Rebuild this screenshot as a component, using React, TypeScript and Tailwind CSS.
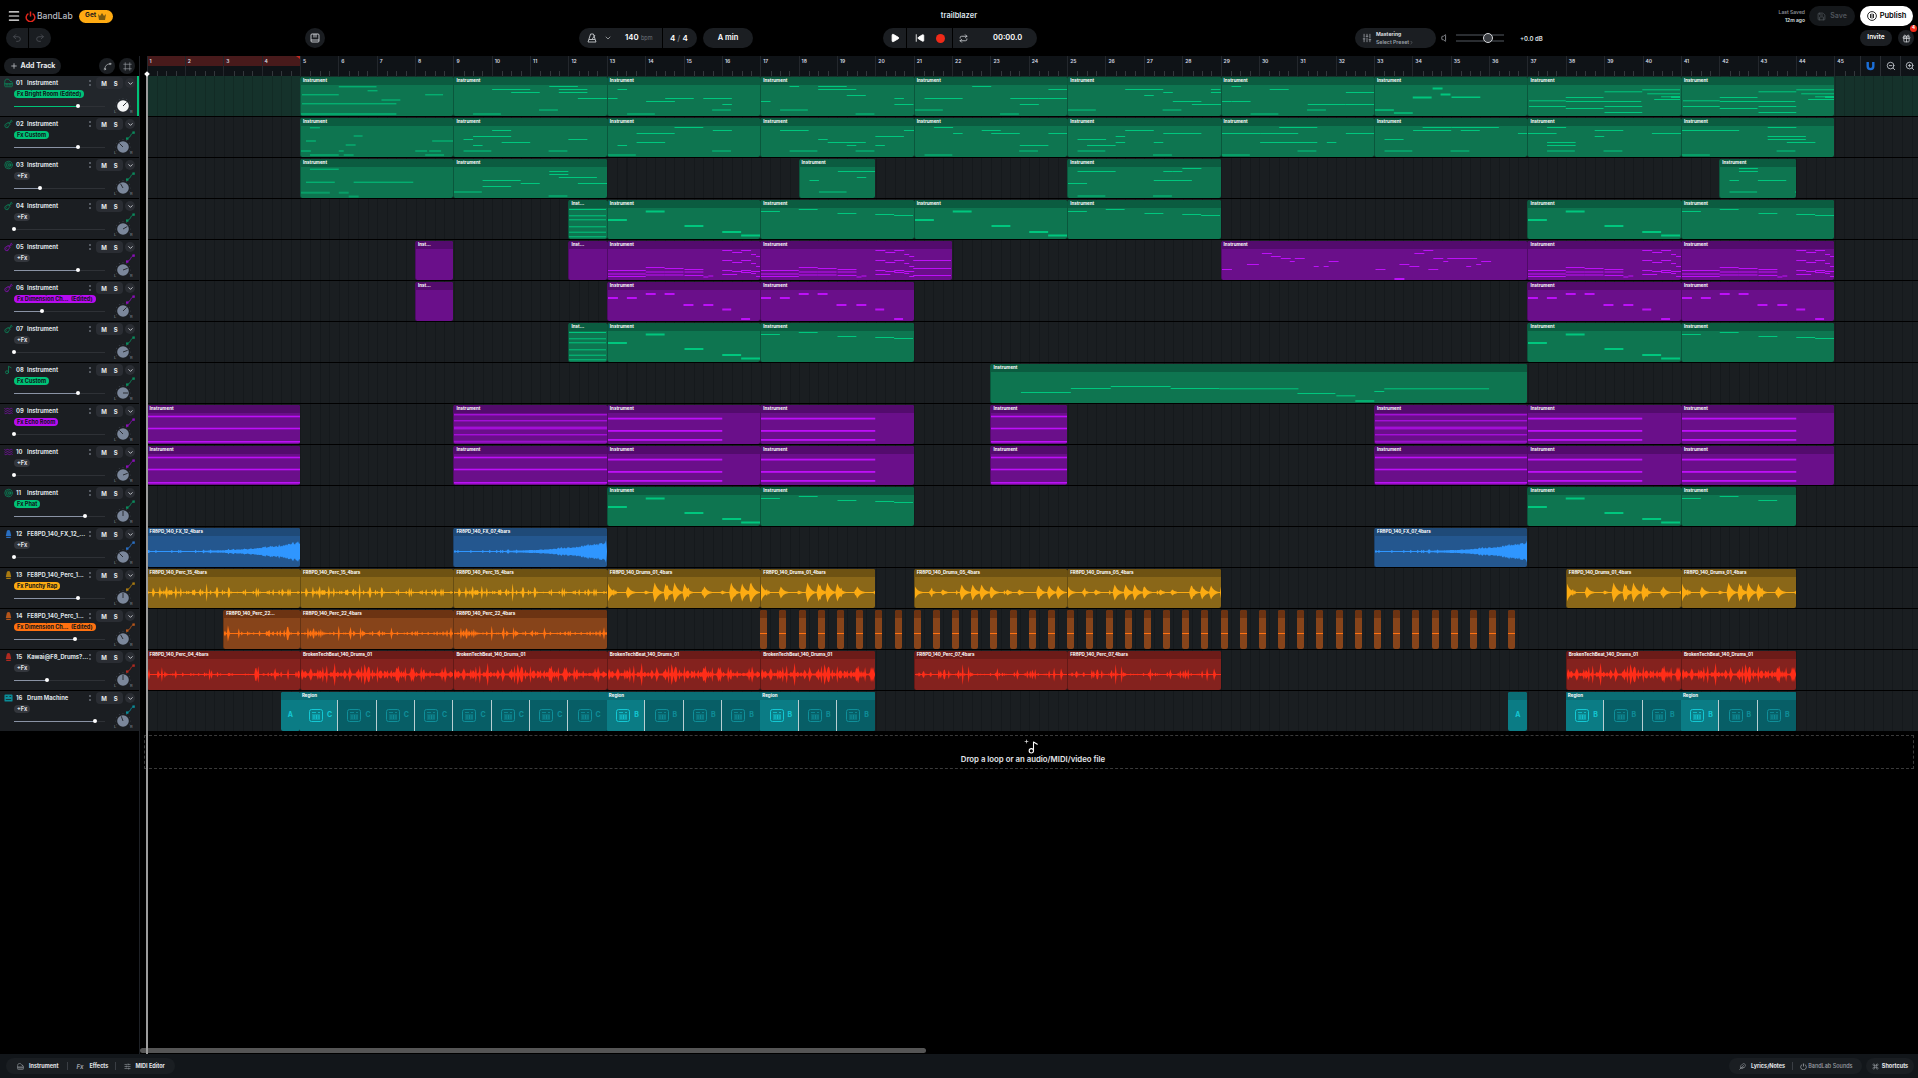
import { ChevronDown, ChevronRight, Command, Feather, Frame, Gift, Guitar, Menu, Music2, Piano, Play, Plus, Redo2, Repeat, Save, SkipBack, SlidersHorizontal, SlidersVertical, Spline, Target, Undo2, Volume, Waves, ZoomIn, ZoomOut } from "lucide-react";

const BAR = 38.36;
const barX = (n: number) => (n - 1) * BAR;

type Tone = "green" | "purple" | "blue" | "yellow" | "orange" | "red" | "teal";

const tones: Record<Tone, { body: string; head: string; mark: string; icon: string; pill: string }> = {
  green: { body: "bg-[#0e7550]", head: "bg-[#0b5c40]", mark: "#00c77e", icon: "text-[#0b8a5c]", pill: "bg-[#00c277]" },
  purple: { body: "bg-[#6a0f8a]", head: "bg-[#530b6d]", mark: "#bd10f8", icon: "text-[#8a10b8]", pill: "bg-[#b70cf0]" },
  blue: { body: "bg-[#24578f]", head: "bg-[#1f4a78]", mark: "#2f96ff", icon: "text-[#2a6fc2]", pill: "bg-[#2f96ff]" },
  yellow: { body: "bg-[#8a6718]", head: "bg-[#6e5212]", mark: "#fcab12", icon: "text-[#a97a10]", pill: "bg-[#fcab12]" },
  orange: { body: "bg-[#87441a]", head: "bg-[#6c3312]", mark: "#ff7110", icon: "text-[#b5551a]", pill: "bg-[#ff7110]" },
  red: { body: "bg-[#84221e]", head: "bg-[#6c1b18]", mark: "#ff2d18", icon: "text-[#b02a20]", pill: "bg-[#ff2d18]" },
  teal: { body: "bg-[#075e66]", head: "bg-[#0a6d75]", mark: "#14c0cc", icon: "text-[#0b8c98]", pill: "bg-[#14c0cc]" },
};

type Wave = "swell" | "perc" | "drums" | "beat";
type ClipDef = { s: number; e: number; label?: string; wave?: Wave };

const ins = (...pairs: [number, number][]): ClipDef[] => pairs.map(([s, e]) => ({ s, e, label: e - s === 1 ? "Inst..." : "Instrument" }));
const EVERY: [number, number][] = [[5, 9], [9, 13], [13, 17], [17, 21], [21, 25], [25, 29], [29, 33], [33, 37], [37, 41], [41, 45]];

const PERC15 = "FR8PD_140_Perc_15_4bars";
const PERC22 = "FR8PD_140_Perc_22_4bars";
const DRUMS1 = "FR8PD_140_Drums_01_4bars";
const DRUMS5 = "FR8PD_140_Drums_05_4bars";
const BROKEN = "BrokenTechBeat_140_Drums_01";
const PERC7 = "FR8PD_140_Perc_07_4bars";

const tracks: {
  name: string; tone: Tone; fx?: string; icon: string; thumb: number; knob: number; clips: ClipDef[];
}[] = [
  { name: "Instrument", tone: "green", fx: "Fx Bright Room (Edited)", icon: "piano", thumb: 78, knob: 45, clips: ins(...EVERY) },
  { name: "Instrument", tone: "green", fx: "Fx Custom", icon: "guitar", thumb: 78, knob: -45, clips: ins(...EVERY) },
  { name: "Instrument", tone: "green", icon: "target", thumb: 40, knob: -30, clips: ins([5, 9], [9, 13], [18, 20], [25, 29], [42, 44]) },
  { name: "Instrument", tone: "green", icon: "guitar", thumb: 14, knob: 60, clips: ins([12, 13], [13, 17], [17, 21], [21, 25], [25, 29], [37, 41], [41, 45]) },
  { name: "Instrument", tone: "purple", icon: "guitar", thumb: 78, knob: 70, clips: ins([8, 9], [12, 13], [13, 17], [17, 22], [29, 37], [37, 41], [41, 45]) },
  { name: "Instrument", tone: "purple", fx: "Fx Dimension Ch...  (Edited)", icon: "guitar", thumb: 42, knob: 45, clips: ins([8, 9], [13, 17], [17, 21], [37, 41], [41, 45]) },
  { name: "Instrument", tone: "green", icon: "guitar", thumb: 14, knob: 70, clips: ins([12, 13], [13, 17], [17, 21], [37, 41], [41, 45]) },
  { name: "Instrument", tone: "green", fx: "Fx Custom", icon: "sax", thumb: 78, knob: 90, clips: ins([23, 37]) },
  { name: "Instrument", tone: "purple", fx: "Fx Echo Room", icon: "waves", thumb: 14, knob: -45, clips: ins([1, 5], [9, 13], [13, 17], [17, 21], [23, 25], [33, 37], [37, 41], [41, 45]) },
  { name: "Instrument", tone: "purple", icon: "waves", thumb: 14, knob: 70, clips: ins([1, 5], [9, 13], [13, 17], [17, 21], [23, 25], [33, 37], [37, 41], [41, 45]) },
  { name: "Instrument", tone: "green", fx: "Fx Phat", icon: "target", thumb: 85, knob: 0, clips: ins([13, 17], [17, 21], [37, 41], [41, 44]) },
  {
    name: "FE8PD_140_FX_12_...", tone: "blue", icon: "bell", thumb: 14, knob: -45,
    clips: [
      { s: 1, e: 5, label: "FR8PD_140_FX_12_4bars", wave: "swell" },
      { s: 9, e: 13, label: "FR8PD_140_FX_07_4bars", wave: "swell" },
      { s: 33, e: 37, label: "FR8PD_140_FX_07_4bars", wave: "swell" },
    ],
  },
  {
    name: "FE8PD_140_Perc_1...", tone: "yellow", fx: "Fx Punchy Rap", icon: "bell", thumb: 78, knob: 0,
    clips: [
      { s: 1, e: 5, label: PERC15, wave: "perc" },
      { s: 5, e: 9, label: PERC15, wave: "perc" },
      { s: 9, e: 13, label: PERC15, wave: "perc" },
      { s: 13, e: 17, label: DRUMS1, wave: "drums" },
      { s: 17, e: 20, label: DRUMS1, wave: "drums" },
      { s: 21, e: 25, label: DRUMS5, wave: "drums" },
      { s: 25, e: 29, label: DRUMS5, wave: "drums" },
      { s: 38, e: 41, label: DRUMS1, wave: "drums" },
      { s: 41, e: 44, label: DRUMS1, wave: "drums" },
    ],
  },
  {
    name: "FE8PD_140_Perc_1...", tone: "orange", fx: "Fx Dimension Ch...  (Edited)", icon: "bell", thumb: 75, knob: -30,
    clips: [
      { s: 3, e: 5, label: "FR8PD_140_Perc_22...", wave: "perc" },
      { s: 5, e: 9, label: PERC22, wave: "perc" },
      { s: 9, e: 13, label: PERC22, wave: "perc" },
    ],
  },
  {
    name: "Kawai@F8_Drums?...", tone: "red", icon: "bell", thumb: 47, knob: 0,
    clips: [
      { s: 1, e: 5, label: "FR8PD_140_Perc_04_4bars", wave: "perc" },
      { s: 5, e: 9, label: BROKEN, wave: "beat" },
      { s: 9, e: 13, label: BROKEN, wave: "beat" },
      { s: 13, e: 17, label: BROKEN, wave: "beat" },
      { s: 17, e: 20, label: BROKEN, wave: "beat" },
      { s: 21, e: 25, label: PERC7, wave: "perc" },
      { s: 25, e: 29, label: PERC7, wave: "perc" },
      { s: 38, e: 41, label: BROKEN, wave: "beat" },
      { s: 41, e: 44, label: BROKEN, wave: "beat" },
    ],
  },
  { name: "Drum Machine", tone: "teal", icon: "machine", thumb: 95, knob: -20, clips: [] },
];

const regions = [
  { s: 5, e: 13, letter: "C" },
  { s: 13, e: 17, letter: "B" },
  { s: 17, e: 20, letter: "B" },
  { s: 38, e: 41, letter: "B" },
  { s: 41, e: 44, letter: "B" },
];

// [x, width, y, height, opacity], in pixels inside the clip body
type N = [number, number, number, number?, number?];

const M1A: N[] = [[38, 38, 1.3], [67, 10, 5.3], [1, 37, 9.3], [81, 19, 14.5], [125, 18, 9.3], [1, 95, 18.3], [0, 96, 28, 2, 0.6]];
const M1B: N[] = [[1, 37, 15.3], [38, 38, 12], [38, 76, 16], [1, 37, 21], [38, 38, 23], [77, 38, 21], [77, 38, 27], [77, 38, 6.3], [115, 38, 4.3], [120, 33, 8.3], [134, 19, 11.3], [144, 9, 11, 2], [127, 26, 14]];
const M1C: N[] = [[0, 19, 24, 2, 0.7], [19, 19, 27, 2, 0.7], [38, 19, 11.5, 2], [58, 10, 2.5, 2], [66, 10, 8.5, 2], [77, 29, 11.5, 1.5]];
const M2A: N[] = [[9, 10, 1.3], [53, 9, 9.5], [5, 10, 14.5], [45, 10, 18.5], [0, 10, 24, 2, 0.5], [38, 5, 24, 2, 0.5], [9, 29, 28, 2, 0.5], [43, 10, 28, 2, 0.5], [115, 12, 24, 2, 0.5], [129, 12, 24, 2, 0.5], [125, 19, 28, 2, 0.5], [132, 21, 14.5]];
const M3A: N[] = [[9, 29, 1.7], [5, 29, 14.7], [53, 60, 14.7], [0, 29, 24.7, 2, 0.5], [38, 10, 24.7, 2, 0.5], [48, 10, 28.5, 2, 0.5]];
const LINES: N[] = [[0, 38, 1], [0, 38, 7.3], [0, 38, 11.3], [0, 38, 18.3], [0, 38, 23.7], [0, 38, 28.3]];
const M5: N[] = [
  [0, 38, 21], [0, 38, 24.5], [0, 38, 27], [38, 19, 18], [38, 19, 22.5], [38, 19, 25.5], [57, 19, 19], [57, 19, 22.5], [57, 19, 25.5], [77, 19, 20], [77, 19, 22.5], [77, 19, 26], [96, 5, 27.5], [101, 5, 26.5],
  [115, 10, 1], [125, 10, 3], [134, 10, 1], [144, 5, 5], [149, 5, 7], [115, 10, 11], [125, 10, 13], [134, 10, 11], [144, 5, 14], [149, 5, 17],
  [115, 10, 21], [125, 10, 22], [134, 10, 21], [144, 10, 22], [115, 15, 25], [134, 10, 23], [144, 5, 24], [149, 5, 27],
];
const M5L: N[] = [[0, 10, 20], [25, 12, 15], [40, 10, 4], [49, 10, 7], [59, 10, 9], [68, 5, 12], [73, 10, 9], [92, 5, 17], [102, 5, 17], [107, 10, 12], [154, 10, 20], [178, 10, 15], [188, 10, 17], [193, 10, 4], [202, 10, 1], [212, 10, 9], [222, 5, 12], [226, 30, 9], [245, 5, 17], [255, 5, 15], [260, 10, 12], [207, 10, 20], [173, 10, 29, 2]];
const M6: N[] = [[0, 10, 7, 2], [19, 10, 7, 2], [38, 10, 3, 2], [57, 10, 3, 2], [76, 10, 14, 2], [96, 10, 14, 2], [115, 9, 18.5, 2], [134, 9, 28, 2]];
const M7A: N[] = [[0, 19, 11, 2], [38, 19, 2.5, 2], [77, 19, 17, 2], [115, 19, 23, 2], [134, 19, 26.5, 2]];
const M7B: N[] = [[0, 19, 3], [38, 19, 1], [77, 19, 5], [115, 19, 6], [134, 19, 7]];
const M8: N[] = [[30, 50, 20], [80, 40, 16], [120, 60, 14], [180, 49, 16], [229, 79, 16.3], [307, 38, 21], [346, 19, 23, 1.5, 0.7], [365, 19, 28, 2, 0.7], [384, 10, 19], [394, 105, 16.3]];
const FULL3: N[] = [[0, 400, 2.7, 1.6], [0, 400, 14.7, 1.6], [0, 400, 28, 1.6]];
const SHORT3: N[] = [[0, 115, 4.7, 1.8], [0, 115, 17, 1.8], [0, 115, 26, 1.8]];
const SIX: N[] = [[0, 400, 1.3], [0, 400, 7.3], [0, 400, 13.7], [0, 400, 15.3], [0, 400, 21.3], [0, 400, 27.7, 2, 0.6]];

function motif(track: number, s: number): N[] | null {
  if (track === 1) {
    if (s === 5) return M1A;
    if (s === 33) return M1C;
    if (s === 37 || s === 41) return M1B;
  }
  if (track === 2 && s === 5) return M2A;
  if (track === 3 && s === 5) return M3A;
  if (track === 4 || track === 7 || track === 11) {
    if (s === 12) return LINES;
    return s === 13 || s === 37 || s === 21 ? M7A : M7B;
  }
  if (track === 5) {
    if (s === 8 || s === 12) return [];
    if (s === 29) return M5L;
    if (s === 17) return [...M5, [153, 38, 11], [153, 38, 19], [153, 38, 26]];
    return M5;
  }
  if (track === 6) return s === 8 ? [] : M6;
  if (track === 8) return M8;
  if (track === 9) return s === 9 || s === 33 ? SIX : s === 1 || s === 23 ? FULL3 : SHORT3;
  if (track === 10) return s === 1 || s === 9 || s === 23 || s === 33 ? FULL3 : SHORT3;
  return null;
}

function rng(seed: number) {
  let a = seed >>> 0;
  return () => {
    a = (a + 0x6d2b79f5) | 0;
    let t = Math.imul(a ^ (a >>> 15), 1 | a);
    t = (t + Math.imul(t ^ (t >>> 7), 61 | t)) ^ t;
    return ((t ^ (t >>> 14)) >>> 0) / 4294967296;
  };
}

function hash(s: string) {
  let h = 7;
  for (let i = 0; i < s.length; i++) h = (h * 31 + s.charCodeAt(i)) | 0;
  return h;
}

function randomNotes(seed: number, width: number): N[] {
  const r = rng(seed);
  const out: N[] = [];
  const n = Math.max(3, Math.round((7 * width) / 153));
  for (let i = 0; i < n; i++) {
    out.push([Math.floor((r() * width) / 9.59) * 9.59, 9.59 * (1 + Math.floor(r() * 4)), 1 + Math.floor(r() * 7) * 3, 1]);
  }
  out.push([Math.floor(r() * 4) * 9.59, 28, 24 + Math.floor(r() * 2) * 4, 2, 0.5]);
  out.push([76 + Math.floor(r() * 4) * 9.59, 19, 24 + Math.floor(r() * 2) * 4, 2, 0.5]);
  return out;
}

function waveAmps(kind: Wave, label: string) {
  const r = rng(hash(label));
  const out: number[] = [];
  const five = label.includes("Drums_05");
  const hits = five
    ? [[0, 6], [16, 3], [28, 3], [47, 8], [58, 8], [67, 8], [77, 6], [93, 3], [105, 3], [124, 7], [135, 7], [144, 7]]
    : [[0, 9], [20, 6], [38, 2], [47, 10], [58, 9], [67, 10], [77, 9], [97, 6], [115, 2], [124, 10], [135, 9], [144, 10]];
  for (let x = 0; x < 154; x++) {
    let a = 0.4;
    if (kind === "swell") {
      const t = x / 154;
      a = 0.4 + Math.pow(t, 3.2) * 10 * (0.65 + 0.35 * r()) + (r() < 0.12 ? 1.2 : 0);
    } else if (kind === "perc") {
      if (r() < 0.45) a += r() * r() * 5;
      if (r() < 0.05) a += 4 + r() * 3;
    } else if (kind === "drums") {
      for (const [hx, h] of hits) {
        if (x >= hx) a = Math.max(a, h * Math.exp(-(x - hx) / 3.2));
        else if (x === hx - 1) a = Math.max(a, h * 0.55);
      }
      if (r() < 0.05) a += r() * 3;
    } else {
      a = 0.7 + r() * r() * 4.5;
      if (r() < 0.2) a += 2 + r() * 5.5;
    }
    out.push(a);
  }
  return out;
}

function WaveShape({ clip, width, color }: { clip: ClipDef; width: number; color: string }) {
  const amps = waveAmps(clip.wave as Wave, clip.label as string);
  const top: string[] = [];
  const bottom: string[] = [];
  const n = Math.ceil(width);
  for (let x = 0; x <= n; x++) {
    const a = amps[x % amps.length];
    top.push(`${x} ${(15.5 - a).toFixed(1)}`);
    bottom.unshift(`${x} ${(15.5 + a).toFixed(1)}`);
  }
  return (
    <svg className="block h-full w-full" viewBox={`0 0 ${width} 31`} preserveAspectRatio="none">
      <path d={`M${top.join("L")}L${bottom.join("L")}Z`} fill={color} />
    </svg>
  );
}

function Notes({ list, width, color }: { list: N[]; width: number; color: string }) {
  return (
    <svg className="block h-full w-full" viewBox={`0 0 ${width} 31`} preserveAspectRatio="none">
      {list.map(([x, w, y, h, o], i) => (
        <rect key={i} x={x} y={y} width={w} height={h ?? 1} fill={color} opacity={o ?? 1} />
      ))}
    </svg>
  );
}

function Clip({ clip, tone, track }: { clip: ClipDef; tone: Tone; track: number }) {
  const t = tones[tone];
  const width = (clip.e - clip.s) * BAR;
  return (
    <div
      className={`absolute top-[1px] bottom-0 flex flex-col overflow-hidden rounded-[2px] border-l border-black/25 ${t.body}`}
      style={{ left: barX(clip.s), width }}
    >
      <div className={`h-[8px] shrink-0 truncate pl-[2px] text-[4.5px] leading-[8px] font-bold text-white ${t.head}`}>{clip.label}</div>
      <div className="min-h-0 flex-1">
        {clip.wave ? (
          <WaveShape clip={clip} width={width} color={t.mark} />
        ) : (
          <Notes list={motif(track, clip.s) ?? randomNotes(track * 1000 + clip.s, width)} width={width} color={t.mark} />
        )}
      </div>
    </div>
  );
}

function PadIcon({ bright }: { bright: boolean }) {
  return (
    <svg width="14" height="13" viewBox="0 0 14 13" fill="none" stroke={bright ? "#14c8d4" : "#0f8f9a"} strokeWidth="1">
      <rect x="0.5" y="0.5" width="13" height="12" rx="2" />
      <path d="M3 3.5h4M9 3.5h2M3 6h8M3 8h8M3 10h8M5 6v4M7.5 6v4M10 6v4" strokeWidth="0.8" />
    </svg>
  );
}

function Region({ s, e, letter }: { s: number; e: number; letter: string }) {
  const cells = Array.from({ length: e - s }, (_, i) => i);
  return (
    <div
      className="absolute top-[1px] bottom-0 flex flex-col overflow-hidden rounded-[1px] bg-[#075e66]"
      style={{ left: barX(s), width: (e - s) * BAR }}
    >
      <div className="h-[8px] shrink-0 bg-[#0a6d75] pl-[2px] text-[4.5px] leading-[8px] font-bold text-white">Region</div>
      <div className="flex min-h-0 flex-1">
        {cells.map((i) => (
          <div
            key={i}
            className={`flex h-full flex-1 items-center justify-center gap-[4px] border-r pl-[4px] ${i === 0 ? "bg-[#0b7c85]" : ""} ${i === cells.length - 1 ? "border-transparent" : "border-[#b8cfd2]"}`}
          >
            <PadIcon bright={i === 0} />
            <span className={`text-[7px] font-bold ${i === 0 ? "text-[#14c8d4]" : "text-[#0f8f9a]"}`}>{letter}</span>
          </div>
        ))}
      </div>
    </div>
  );
}

function ACell({ s }: { s: number }) {
  return (
    <div className="absolute top-[1px] bottom-0 flex flex-col overflow-hidden rounded-[2px] bg-[#0b7c85]" style={{ left: barX(s), width: BAR / 2 }}>
      <div className="h-[8px] shrink-0 bg-[#0a6d75]" />
      <div className="flex flex-1 items-center justify-center text-[7px] font-bold text-[#14c8d4]">A</div>
    </div>
  );
}

function Lane({ index }: { index: number }) {
  const track = tracks[index];
  const selected = index === 0;
  const blips = index === 13 ? Array.from({ length: 40 }, (_, i) => i) : [];
  return (
    <div
      className={`relative mb-px h-[40px] ${
        selected
          ? "bg-[repeating-linear-gradient(90deg,#122b25_0,#122b25_1px,#15322b_1px,#15322b_9.59px)]"
          : "bg-[repeating-linear-gradient(90deg,#15191c_0,#15191c_1px,#1a1e21_1px,#1a1e21_9.59px)]"
      }`}
    >
      {track.clips.map((c) => (
        <Clip key={c.s} clip={c} tone={track.tone} track={index + 1} />
      ))}
      {blips.map((i) => (
        <div
          key={i}
          className="absolute top-[1px] bottom-0 flex w-[7px] flex-col overflow-hidden rounded-[2px] bg-[#87441a]"
          style={{ left: barX(17) + i * 19.18 }}
        >
          <div className="h-[8px] bg-[#6c3312]" />
          <div className="flex flex-1 items-center justify-center">
            <div className="h-px w-full bg-[#ff7110]" />
          </div>
        </div>
      ))}
      {index === 15 && (
        <>
          <ACell s={4.5} />
          <ACell s={36.5} />
          {regions.map((r) => (
            <Region key={r.s} {...r} />
          ))}
        </>
      )}
    </div>
  );
}

function TrackIcon({ kind, tone }: { kind: string; tone: Tone }) {
  const cls = `h-[10px] w-[10px] ${tones[tone].icon}`;
  if (kind === "piano") return <Piano className={cls} strokeWidth={2} />;
  if (kind === "guitar") return <Guitar className={cls} strokeWidth={2} />;
  if (kind === "waves") return <Waves className={cls} strokeWidth={2} />;
  if (kind === "target") return <Target className={cls} strokeWidth={2} />;
  if (kind === "sax") return <Music2 className={cls} strokeWidth={2} />;
  if (kind === "machine")
    return (
      <svg className={cls} viewBox="0 0 10 10" fill="currentColor">
        <path d="M1.5 1h7A1 1 0 0 1 9.5 2v6a1 1 0 0 1-1 1h-7a1 1 0 0 1-1-1V2a1 1 0 0 1 1-1zM2 3v1h2V3zm4 0v1h2V3zM2 7h6V6H2z" fillRule="evenodd" />
      </svg>
    );
  return (
    <svg className={cls} viewBox="0 0 10 10" fill="currentColor">
      <path d="M5 0.5c1.3 0 2 1 2.1 2.3L8 7.2H2l.9-4.4C3 1.5 3.7.5 5 .5zM2.5 8h5v1.5h-5z" />
    </svg>
  );
}

function AutoIcon({ tone }: { tone: Tone }) {
  return (
    <svg className={`h-[9px] w-[9px] ${tones[tone].icon}`} viewBox="0 0 9 9" fill="currentColor">
      <path d="M1.5 7.5C3 7 4 6 4.6 4.6 5.2 3.2 6 2.2 7.5 1.6" fill="none" stroke="currentColor" strokeWidth="0.9" />
      <rect x="0" y="6.4" width="2.4" height="2.4" />
      <rect x="6.4" y="0.4" width="2.4" height="2.4" />
    </svg>
  );
}

function Knob({ angle, on }: { angle: number; on: boolean }) {
  const ticks = Array.from({ length: 9 }, (_, i) => -120 + i * 30);
  return (
    <svg width="22" height="16" viewBox="0 0 22 16" className="shrink-0">
      {ticks.map((a) => (
        <circle key={a} cx={11 + 7.6 * Math.sin((a * Math.PI) / 180)} cy={8 - 7.6 * Math.cos((a * Math.PI) / 180)} r="0.35" fill="#6b7280" />
      ))}
      <circle cx="11" cy="8" r="5.8" fill={on ? "#f4f5f6" : "#7b879b"} />
      <line
        x1="11"
        y1="8"
        x2={11 + 5 * Math.sin((angle * Math.PI) / 180)}
        y2={8 - 5 * Math.cos((angle * Math.PI) / 180)}
        stroke="#2a2d33"
        strokeWidth="1"
      />
      <text x="2" y="15" fontSize="4" fill="#8b919b">L</text>
      <text x="18" y="15" fontSize="4" fill="#8b919b">R</text>
    </svg>
  );
}

function TrackHead({ index }: { index: number }) {
  const t = tracks[index];
  const on = index === 0;
  const num = String(index + 1).padStart(2, "0");
  return (
    <div className={`mb-px h-[40px] w-[139px] pt-[1px] ${on ? "border-r-2 border-[#00c277] bg-[#22262b]" : "bg-[#1b1e22]"}`}>
      <div className="flex h-[12px] items-center pl-[4px]">
        <div className="flex w-[9px] justify-center"><TrackIcon kind={t.icon} tone={t.tone} /></div>
        <span className="ml-[3px] w-[11px] text-[5.8px] font-bold text-[#dfe2e6]">{num}</span>
        <span className="w-[62px] truncate text-[5.8px] font-bold text-[#dfe2e6]">{t.name}</span>
        <span className="h-[6px] w-[2px] border-l-2 border-dotted border-[#555a62]" />
        <div className="ml-[5px] flex h-[12px] w-[27px] items-center justify-around rounded-[4px] bg-[#2a2d33] px-[2px] text-[6px] font-bold text-[#e8eaed]">
          <span>M</span>
          <span>S</span>
        </div>
        <div className="ml-[2px] flex h-[10px] w-[10px] items-center justify-center rounded-full bg-[#2a2d33]">
          <ChevronDown className="h-[7px] w-[7px] text-[#d0d3d8]" strokeWidth={3} />
        </div>
      </div>
      <div className="mt-[1px] flex h-[8px] items-center pr-[4px] pl-[14px]">
        {t.fx ? (
          <span className={`flex h-[8px] items-center rounded-full px-[3px] text-[5.6px] font-bold whitespace-pre text-[#101318] ${tones[t.tone].pill}`}>{t.fx}</span>
        ) : (
          <span className="flex h-[8px] items-center rounded-full bg-[#33363c] px-[3px] text-[5.6px] font-bold text-[#e0e2e6]">+Fx</span>
        )}
        {!on && <span className="ml-auto"><AutoIcon tone={t.tone} /></span>}
      </div>
      <div className="flex h-[16px] items-center pl-[14px]">
        <div className="relative h-px w-[91px] bg-[#2e3136]">
          <div className={`h-px ${on ? "bg-[#00c277]" : "bg-[#8a93a5]"}`} style={{ width: t.thumb - 14 }} />
          <div className="absolute top-[-1.5px] h-[4px] w-[4px] rounded-full bg-white" style={{ left: t.thumb - 16 }} />
        </div>
        <div className="ml-[7px]"><Knob angle={t.knob} on={on} /></div>
      </div>
    </div>
  );
}

function Ruler() {
  const cells = Array.from({ length: 46 }, (_, i) => i);
  return (
    <div className="relative ml-[6.5px] h-[20px] overflow-hidden bg-[#0f1317]">
      <div className="grid w-max grid-cols-[repeat(46,38.36px)]">
        {cells.map((i) => (
          <div key={i} className="border-l border-[#23272c]">
            <div className={`h-[10px] pl-[2px] text-[5px] leading-[10px] font-semibold text-[#d5dae2] ${i < 4 ? "bg-[#481a1b]" : ""}`}>{i + 1}</div>
            <div className="grid h-[10px] grid-cols-4 pt-[5px]">
              <span />
              <span className="border-l border-[#33373c]" />
              <span className="border-l border-[#33373c]" />
              <span className="border-l border-[#33373c]" />
            </div>
          </div>
        ))}
      </div>
      <svg className="absolute top-0 left-[149.5px]" width="4" height="3" viewBox="0 0 4 3"><path d="M0 0h4v3z" fill="#c22a22" /></svg>
      <div className="absolute top-0 right-0 flex h-[20px] w-[58px] bg-[#0f1317]">
        <div className="flex w-[20px] items-center justify-center border-l border-[#2a2e33]">
          <svg width="9" height="10" viewBox="0 0 9 10" fill="none">
            <path d="M1.7 1v4.3a2.8 2.8 0 0 0 5.6 0V1" stroke="#1b6fd8" strokeWidth="2.4" />
          </svg>
        </div>
        <div className="flex w-[20px] items-center justify-center border-l border-[#2a2e33]"><ZoomOut className="h-[10px] w-[10px] text-[#c8ccd2]" /></div>
        <div className="flex flex-1 items-center justify-center border-l border-[#2a2e33]"><ZoomIn className="h-[10px] w-[10px] text-[#c8ccd2]" /></div>
      </div>
    </div>
  );
}

function TopBar() {
  return (
    <div className="h-[56px] shrink-0">
      <div className="grid h-[28px] grid-cols-[1fr_auto_1fr] items-center pt-[4px]">
        <div className="flex items-center pl-[7px]">
          <Menu className="h-[14px] w-[14px] text-white" strokeWidth={2} />
          <svg className="ml-[4px]" width="11" height="11" viewBox="0 0 11 11" fill="none" stroke="#e1261c" strokeWidth="1.5">
            <path d="M3.4 2.6a4.3 4.3 0 1 0 4.2 0" />
            <path d="M5.5 0.5v5" />
          </svg>
          <span className="ml-[1px] text-[8.5px] font-medium text-[#b9bcc1]">BandLab</span>
          <div className="ml-[6px] flex h-[13px] w-[34px] items-center justify-center gap-[2px] rounded-full bg-[#ffab12] text-[6.5px] font-bold text-[#1a1a1a]">
            Get
            <svg width="8" height="7" viewBox="0 0 8 7" fill="#7a5a10"><path d="M0 1l2 2 2-3 2 3 2-2-1 6H1z" /></svg>
          </div>
        </div>
        <span className="text-[7.5px] font-semibold text-[#dfe6ee]">trailblazer</span>
        <div className="flex items-center justify-end pr-[5px]">
          <div className="text-right text-[5px] leading-[8px] font-semibold">
            <div className="text-[#8a8f96]">Last Saved</div>
            <div className="text-[#dfe2e6]">12m ago</div>
          </div>
          <div className="ml-[4px] flex h-[20px] w-[46px] items-center justify-center gap-[4px] rounded-full bg-[#15181b] text-[7px] font-semibold text-[#50555b]">
            <Save className="h-[9px] w-[9px]" />
            Save
          </div>
          <div className="ml-[5px] flex h-[20px] w-[53px] items-center justify-center gap-[3px] rounded-full bg-white text-[7.5px] font-semibold text-black">
            <svg width="10" height="10" viewBox="0 0 10 10" fill="none" stroke="#111" strokeWidth="0.9">
              <circle cx="5" cy="5" r="4.4" />
              <path d="M3.5 3v4M5 2.4v5.2M6.5 3v4" />
            </svg>
            Publish
          </div>
        </div>
      </div>
      <div className="flex h-[20px] items-center">
        <div className="ml-[6px] flex h-[20px] w-[45px] items-center rounded-full bg-[#1a1d21]">
          <div className="flex h-full flex-1 items-center justify-center border-r border-black"><Undo2 className="h-[10px] w-[10px] text-[#4d5157]" /></div>
          <div className="flex flex-1 justify-center"><Redo2 className="h-[10px] w-[10px] text-[#4d5157]" /></div>
        </div>
        <div className="ml-[254px] flex h-[20px] w-[20px] items-center justify-center rounded-full bg-[#1a1d21]">
          <svg width="10" height="10" viewBox="0 0 10 10" fill="none" stroke="#d4d7db" strokeWidth="0.9">
            <rect x="1" y="1" width="8" height="8" rx="1" />
            <path d="M4 1v3.5M6 1v3.5M1 7h8" />
          </svg>
        </div>
        <div className="ml-[254px] flex h-[20px] w-[118px] items-center rounded-full bg-[#1b1e22] text-white">
          <svg className="ml-[8px] shrink-0" width="10" height="10" viewBox="0 0 10 10" fill="none" stroke="#c5c8cc" strokeWidth="0.9">
            <path d="M3.6 1h2.8L9 9H1zM2 6.5h6M5 6.5L8 2" />
          </svg>
          <ChevronDown className="ml-[7px] h-[8px] w-[8px] shrink-0 text-[#c5c8cc]" strokeWidth={2} />
          <span className="ml-[13px] w-[14px] text-[7.8px] font-semibold">140</span>
          <span className="ml-[2px] w-[15px] text-[5.5px] text-[#71767d]">bpm</span>
          <span className="ml-[6px] h-[20px] border-l border-black" />
          <span className="ml-[7px] text-[8px] font-semibold">4 <span className="text-[#71767d]">/</span> 4</span>
        </div>
        <div className="ml-[6px] flex h-[20px] w-[50px] items-center justify-center rounded-full bg-[#1b1e22] text-[7.5px] font-semibold text-white">A min</div>
        <div className="ml-[130px] flex h-[20px] w-[154px] items-center rounded-full bg-[#1b1e22]">
          <div className="flex h-full w-[24px] items-center justify-center border-r border-black"><Play className="h-[10px] w-[10px] fill-white text-white" /></div>
          <div className="flex h-full w-[46px] items-center justify-around border-r border-black px-[2px]">
            <SkipBack className="h-[10px] w-[10px] fill-white text-white" />
            <span className="h-[9px] w-[9px] rounded-full bg-[#f02a18]" />
          </div>
          <Repeat className="ml-[6px] h-[9px] w-[9px] text-[#dcdfe3]" />
          <span className="ml-[25px] text-[7.5px] font-semibold text-white">00:00.0</span>
        </div>
        <div className="ml-[318px] flex h-[20px] w-[81px] items-center rounded-full bg-[#1b1e22] pl-[7px]">
          <SlidersVertical className="h-[10px] w-[10px] text-[#9a9ea4]" />
          <div className="ml-[4px] text-[5.2px] leading-[8px] font-semibold">
            <div className="text-[#e8eaed]">Mastering</div>
            <div className="flex items-center text-[#9aa0a8]">Select Preset<ChevronRight className="h-[5px] w-[5px]" /></div>
          </div>
        </div>
        <Volume className="ml-[5px] h-[10px] w-[10px] text-[#9a9ea4]" />
        <div className="relative ml-[5px] flex h-[8px] w-[48px] flex-col justify-between">
          <span className="h-[2px] bg-[#2a2d31]" />
          <span className="h-[2px] bg-[#2a2d31]" />
          <span className="absolute top-[-1px] left-[27px] h-[10px] w-[10px] rounded-full border border-[#d5d7da] bg-[#3a3d42]" />
        </div>
        <span className="ml-[16px] w-[26px] text-[6px] font-semibold text-[#dfe2e6]">+0.0 dB</span>
        <div className="ml-auto flex h-[16px] w-[32px] items-center justify-center rounded-full bg-[#1b1e22] text-[6.5px] font-semibold text-white">Invite</div>
        <div className="relative mr-[4px] ml-[6px] flex h-[16px] w-[16px] items-center justify-center rounded-full bg-[#1b1e22]">
          <Gift className="h-[9px] w-[9px] text-[#d4d7db]" />
          <span className="absolute top-[-5px] right-[-3px] flex h-[7px] w-[7px] items-center justify-center rounded-full bg-[#f02a18] text-[4.5px] font-bold text-white">4</span>
        </div>
      </div>
    </div>
  );
}

function BottomBar() {
  return (
    <div className="flex h-[24px] shrink-0 items-center bg-[#12161a] text-[5.5px] font-bold text-[#e4e6ea]">
      <div className="ml-[6px] flex h-[16px] w-[169px] items-center rounded-full bg-[#1a1e22] pl-[11px]">
        <Piano className="h-[7px] w-[7px] text-[#9a9ea4]" />
        <span className="ml-[5px]">Instrument</span>
        <span className="ml-[9px] h-[8px] border-l border-[#3a3e44]" />
        <span className="ml-[8px] text-[6px] text-[#9a9ea4] italic">Fx</span>
        <span className="ml-[6px]">Effects</span>
        <span className="ml-[7px] h-[8px] border-l border-[#3a3e44]" />
        <SlidersHorizontal className="ml-[8px] h-[7px] w-[7px] text-[#9a9ea4]" />
        <span className="ml-[4px]">MIDI Editor</span>
      </div>
      <div className="ml-auto flex h-[16px] w-[133px] items-center rounded-full bg-[#1a1e22] pl-[10px]">
        <Feather className="h-[7px] w-[7px] text-[#9a9ea4]" />
        <span className="ml-[5px]">Lyrics/Notes</span>
        <span className="ml-[7px] h-[8px] border-l border-[#3a3e44]" />
        <svg className="ml-[7px]" width="7" height="7" viewBox="0 0 7 7" fill="none" stroke="#9a9ea4" strokeWidth="0.8">
          <path d="M2.2 1.5a2.8 2.8 0 1 0 2.6 0M3.5 .5v3" />
        </svg>
        <span className="ml-[1px] font-medium text-[#9a9ea4]">BandLab Sounds</span>
      </div>
      <div className="mr-[4px] ml-[4px] flex h-[16px] w-[48px] items-center justify-center gap-[3px] rounded-full bg-[#1a1e22]">
        <Command className="h-[7px] w-[7px] text-[#9a9ea4]" />
        Shortcuts
      </div>
    </div>
  );
}

export default function App() {
  return (
    <div className="flex h-[1078px] w-[1918px] flex-col overflow-hidden bg-black font-['Inter',sans-serif]">
      <TopBar />
      <div className="flex min-h-0 flex-1">
        <div className="w-[140px] shrink-0 border-r border-[#1e2126]">
          <div className="flex h-[20px] items-center">
            <div className="ml-[4px] flex h-[16px] w-[57px] items-center justify-center gap-[3px] rounded-full bg-[#1b1e22] text-[7px] font-bold text-[#e8eaed]">
              <Plus className="h-[8px] w-[8px] text-[#b9bcc1]" strokeWidth={2.5} />
              Add Track
            </div>
            <div className="ml-[38px] flex h-[16px] w-[16px] items-center justify-center rounded-full bg-[#1b1e22]">
              <Spline className="h-[9px] w-[9px] text-[#d4d7db]" strokeWidth={1.5} />
            </div>
            <div className="ml-[4px] flex h-[16px] w-[16px] items-center justify-center rounded-full bg-[#1b1e22]">
              <Frame className="h-[9px] w-[9px] text-[#a8acb2]" strokeWidth={1.5} />
            </div>
          </div>
          {tracks.map((_, i) => (
            <TrackHead key={i} index={i} />
          ))}
        </div>
        <div className="relative flex min-w-0 flex-1 flex-col">
          <Ruler />
          <div className="ml-[6.5px]">
            {tracks.map((_, i) => (
              <Lane key={i} index={i} />
            ))}
          </div>
          <div className="mx-[4px] mt-[3px] flex h-[34px] flex-col items-center justify-center border border-dashed border-[#3a3a3a] pl-[8px]">
            <div className="relative">
              <Music2 className="h-[13px] w-[13px] text-white" />
              <Plus className="absolute top-[-2px] left-[-3px] h-[5px] w-[5px] text-white" strokeWidth={3} />
            </div>
            <span className="text-[7.8px] leading-[10px] font-semibold text-[#e4e6ea]">Drop a loop or an audio/MIDI/video file</span>
          </div>
          <div className="flex-1" />
          <div className="mb-px h-[5px] w-[786px] rounded-full bg-[#555]" />
          <div className="absolute top-[17px] bottom-0 left-[6px] w-[2px] bg-[#9c9c9c]">
            <div className="absolute top-[-1px] left-[-1px] h-[4px] w-[4px] rotate-45 bg-white" />
          </div>
        </div>
      </div>
      <BottomBar />
    </div>
  );
}
